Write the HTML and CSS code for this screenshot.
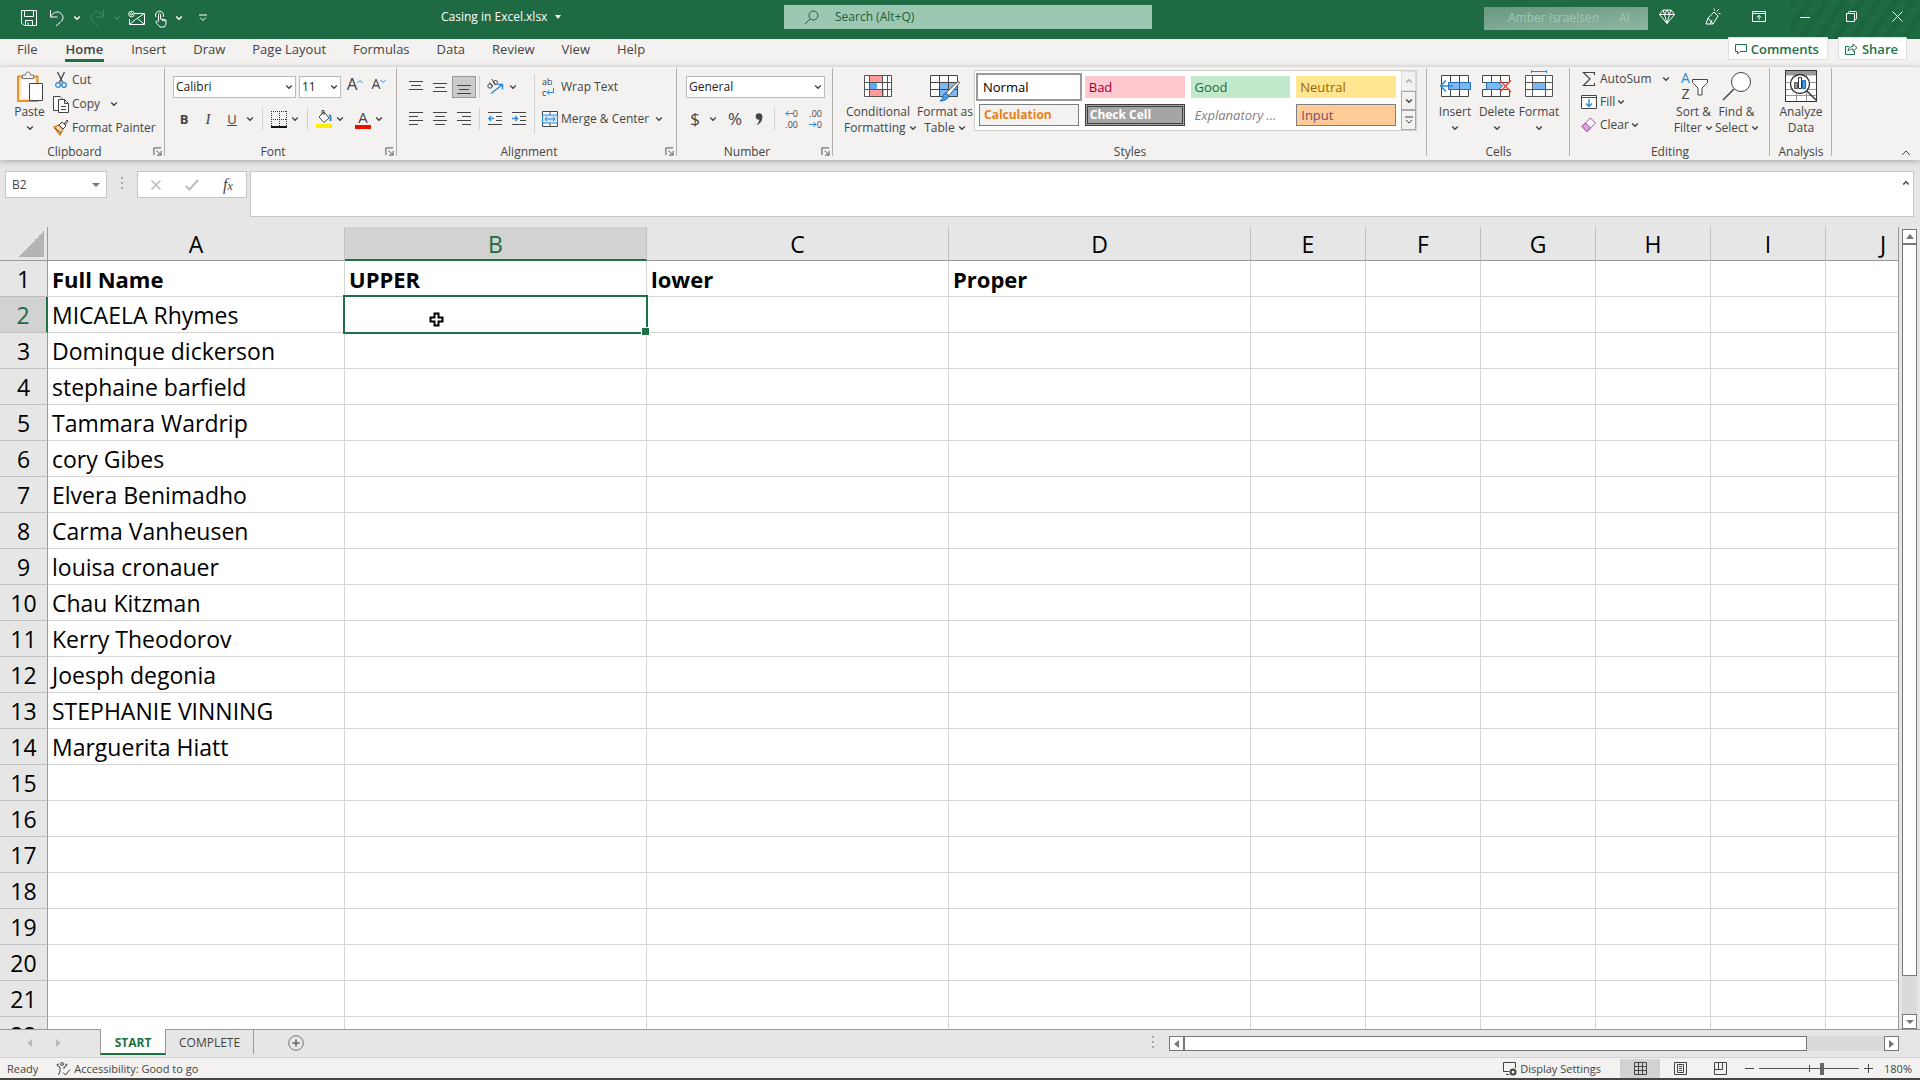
FILE: index.html
```html
<!DOCTYPE html>
<html lang="en">
<head>
  <meta charset="UTF-8">
  <meta name="viewport" content="width=device-width, initial-scale=1.0">
  <title>Casing in Excel.xlsx</title>
  <link rel="stylesheet" href="styles.css">
</head>
<body>
  <svg class="defs" aria-hidden="true">
    <symbol id="chev" viewBox="0 0 8 8"><path d="M1.2 2.5 4 5.3 6.8 2.5" fill="none" stroke="currentColor" stroke-width="1.4"/></symbol>
    <symbol id="launch" viewBox="0 0 10 10"><path d="M1 9V1h8M4 4l4.5 4.5M9 4.5V9H4.500" fill="none" stroke="currentColor"/></symbol>
  </svg>

  <header class="titlebar">
    <div class="quick">
      <button class="qa" aria-label="Save"><svg width="18" height="18" viewBox="0 0 18 18"><path d="M1.500 1.500h15v15H4l-2.500-2.500zM4.500 1.500v6h9v-6M5.500 16.500v-5h7v5M8 16v-2.500"/></svg></button>
      <button class="qa" aria-label="Undo"><svg width="16" height="18" viewBox="0 0 16 18"><path d="M1.500 1v7h7M1.500 8C4 3 9 1.500 12 4.500s2.500 6-.5 8.500L7 17"/></svg></button>
      <button class="qd" aria-label="Undo list"><svg class="chev"><use href="#chev"/></svg></button>
      <button class="qa dim" aria-label="Redo"><svg width="16" height="18" viewBox="0 0 16 18"><path d="M14.500 1v7h-7M14.500 8C12 3 7 1.500 4 4.500s-2.500 6 .5 8.500L9 17"/></svg></button>
      <button class="qd dim" aria-label="Redo list"><svg class="chev"><use href="#chev"/></svg></button>
      <button class="qa" aria-label="Email"><svg width="18" height="16" viewBox="0 0 18 16"><path d="M7 3.500h9.500v11h-15V9M1.500 14.500l6-5 9-6M10 9l6 5"/><circle cx="3.500" cy="4" r="2.800"/><circle cx="3.500" cy="4" r="1"/></svg></button>
      <button class="qa touch" aria-label="Touch mode"><svg width="14" height="19" viewBox="0 0 14 19"><path d="M2 8a4 4 0 1 1 7 0M4.500 12V5.500c0-1.500 2-1.500 2 0V10l5.500 1v4l-1.500 3H6L2 13.500c-.5-1 .8-2 1.500-1.200L4.500 13M8.500 10v2M10.200 10.500v2"/></svg></button>
      <button class="qd" aria-label="Mode list"><svg class="chev"><use href="#chev"/></svg></button>
      <button class="qa custom" aria-label="Customize toolbar"><svg width="8" height="8" viewBox="0 0 8 8"><path d="M0 1h8M1 3.500l3 3 3-3"/></svg></button>
    </div>
    <div class="file-name">Casing in Excel.xlsx <span class="tri"></span></div>
    <label class="search">
      <svg width="15" height="15" viewBox="0 0 15 15"><circle cx="9.500" cy="5.500" r="4.500"/><path d="M6.200 8.800.8 14.200"/></svg>
      <input type="text" placeholder="Search (Alt+Q)" aria-label="Search">
    </label>
    <div class="window">
      <div class="account"><span>Amber Israelsen</span><span>AI</span></div>
      <button class="wb" aria-label="Premium"><svg width="16" height="15" viewBox="0 0 16 15"><path d="M4 1h8l3.500 4.500L8 14.500.5 5.500zM.5 5.500h15M4 1l1.500 4.500L8 14.500l2.500-9L12 1M5.500 5.500 8 1l2.500 4.500"/></svg></button>
      <button class="wb" aria-label="Draw"><svg width="16" height="17" viewBox="0 0 16 17"><path d="M1 16l2-6 6-6 4 4-5 8zM3 10l5 6M5 16l2-4M9.500 2.500 9 .5M11.500 3.500 14 1M13.500 5.500h2"/></svg></button>
      <button class="wb" aria-label="Ribbon display"><svg width="14" height="13" viewBox="0 0 14 13"><path d="M.5 1.500h13v10H.5zM.5 3.500h13M7 10V5.500M4.800 7.500 7 5.300l2.200 2.200"/></svg></button>
      <button class="wb" aria-label="Minimize"><svg width="10" height="10" viewBox="0 0 10 10"><path d="M0 5.500h10"/></svg></button>
      <button class="wb" aria-label="Restore"><svg width="11" height="11" viewBox="0 0 11 11"><path d="M.5 2.500h8v8h-8zM2.500 2.500V1.500q0-1 1-1h6q1 0 1 1v6q0 1-1 1h-1"/></svg></button>
      <button class="wb" aria-label="Close"><svg width="11" height="11" viewBox="0 0 11 11"><path d="M.5.5l10 10M10.500.5l-10 10"/></svg></button>
    </div>
  </header>

  <nav class="tabs">
    <a href="#">File</a>
    <a href="#" class="active">Home</a>
    <a href="#">Insert</a>
    <a href="#">Draw</a>
    <a href="#">Page Layout</a>
    <a href="#">Formulas</a>
    <a href="#">Data</a>
    <a href="#">Review</a>
    <a href="#">View</a>
    <a href="#">Help</a>
    <div class="tab-actions">
      <button><svg width="12" height="12" viewBox="0 0 12 12"><path d="M.5 1.500h11v7H5l-2.500 2.500V8.500h-2z"/></svg>Comments</button>
      <button><svg width="13" height="12" viewBox="0 0 13 12"><path d="M4 3.500H.5v8h9V8M3 8c0-3 2-4.500 5-4.500V1l4 3.700L8 8.300V6C6 6 4.500 6.500 3 8z"/></svg>Share</button>
    </div>
  </nav>

  <section class="ribbon">
    <div class="group clipboard">
      <div class="group-body">
        <button class="big">
          <svg class="art" width="28" height="32" viewBox="0 0 28 32"><path d="M2 6.500h19.500V31H2z" fill="#fde3bd" stroke="#e8912d" stroke-width="2"/><path d="M5 9.500h14V29H5z" fill="#fff"/><path d="M6.500 8.500V5h3c0-4 5-4 5 0h3v3.500z" fill="#f3f2f1" stroke="#777"/><path d="M13.500 13.500h13v17h-13z" fill="#fff" stroke="#444"/></svg>
          <span>Paste</span><svg class="chev"><use href="#chev"/></svg>
        </button>
        <div class="list">
          <div class="item"><button><svg class="art" width="16" height="18" viewBox="0 0 16 18"><path d="M4.500 1l5.500 11M11.500 1 6 12" stroke="#444" stroke-width="1.300"/><circle cx="5" cy="14" r="2.300" stroke="#2b88d8" stroke-width="1.300"/><circle cx="11" cy="14" r="2.300" stroke="#2b88d8" stroke-width="1.300"/></svg>Cut</button></div>
          <div class="item"><button><svg class="art" width="16" height="18" viewBox="0 0 16 18"><path d="M5 15.500H.5v-14H7l2 2" fill="#fff" stroke="#444"/><path d="M5.500 4.500h6l4 4v9h-10zM11.500 4.500v4h4M8 11.500h5M8 14.500h5" fill="#fff" stroke="#444"/></svg>Copy</button><button class="dd far" aria-label="Copy options"><svg class="chev"><use href="#chev"/></svg></button></div>
          <div class="item"><button><svg class="art" width="16" height="18" viewBox="0 0 16 18"><path d="M1 8l5-2 4 4-3 6z" fill="#fbd3a5" stroke="#e07b1a" stroke-width="1.400"/><path d="M2 9l6 5M6 6l3-3 4 4-3 3zM11 5l3-4 1 1-3 4" fill="#fff" stroke="#444"/></svg>Format Painter</button></div>
        </div>
      </div>
      <div class="group-label"><span>Clipboard</span><button aria-label="Clipboard options"><svg><use href="#launch"/></svg></button></div>
    </div>

    <div class="group font">
      <div class="group-body rows">
        <div class="row row-font">
          <div class="combo combo-font"><select aria-label="Font"><option>Calibri</option></select><svg class="chev"><use href="#chev"/></svg></div>
          <div class="combo combo-size"><select aria-label="Font size"><option>11</option></select><svg class="chev"><use href="#chev"/></svg></div>
          <div class="pair">
            <button class="ib grow" aria-label="Increase font size">A<svg class="blue" width="6" height="5" viewBox="0 0 6 5"><path d="M.5 4 3 1.500 5.500 4"/></svg></button>
            <button class="ib grow shrink" aria-label="Decrease font size">A<svg class="blue" width="6" height="5" viewBox="0 0 6 5"><path d="M.5 1 3 3.500 5.500 1"/></svg></button>
          </div>
        </div>
        <div class="row">
          <button class="ib b">B</button><button class="ib i">I</button><button class="ib u">U</button>
          <button class="dd" aria-label="Underline options"><svg class="chev"><use href="#chev"/></svg></button><i class="sep wide"></i>
          <button class="ib s" aria-label="Borders"><svg class="art" width="16" height="17" viewBox="0 0 16 17"><path d="M.5 0v15M15.500 0v15M8.500 0v15M0 .5h16M0 8.500h16" stroke="#333" stroke-dasharray="1 1"/><path d="M0 16h16" stroke="#111" stroke-width="2"/></svg></button>
          <button class="dd" aria-label="Border options"><svg class="chev"><use href="#chev"/></svg></button><i class="sep wide"></i>
          <button class="ib s" aria-label="Fill color"><svg class="art" width="16" height="18" viewBox="0 0 16 18"><path d="M3 7l5-5 5 6-5 4.500zM6 4V.5h2V5" fill="#fff" stroke="#444"/><path d="M13 5l1.500 1v5" stroke="#2b88d8" stroke-width="2"/><path d="M0 14h16v4H0z" fill="#ffed00"/></svg></button>
          <button class="dd" aria-label="Fill options"><svg class="chev"><use href="#chev"/></svg></button>
          <button class="ib s a" aria-label="Font color">A</button>
          <button class="dd" aria-label="Font color options"><svg class="chev"><use href="#chev"/></svg></button>
        </div>
      </div>
      <div class="group-label"><span>Font</span><button aria-label="Font options"><svg><use href="#launch"/></svg></button></div>
    </div>

    <div class="group alignment">
      <div class="group-body">
        <div class="rows">
          <div class="row">
            <button class="ib" aria-label="Top align"><svg class="line" width="14" height="14" viewBox="0 0 14 14"><path d="M0 1.500h14M2 5.500h10M0 9.500h14"/></svg></button>
            <button class="ib" aria-label="Middle align"><svg class="line" width="14" height="14" viewBox="0 0 14 14"><path d="M0 3.500h14M2 7.500h10M0 11.500h14"/></svg></button>
            <button class="ib on" aria-label="Bottom align"><svg class="line" width="14" height="14" viewBox="0 0 14 14"><path d="M0 5.500h14M2 9.500h10M0 13.500h14"/></svg></button>
            <i class="sep"></i>
            <button class="ib" aria-label="Orientation"><svg class="art" width="18" height="16" viewBox="0 0 18 16"><g stroke="#444"><circle cx="4" cy="7" r="2.200"/><path d="M3.500 3.500 7 8M5.500 0l4 5.500"/><circle cx="9.500" cy="3.500" r="2"/></g><path d="M5 14.500 16 6M11.500 5.500h5v5" stroke="#2b88d8" stroke-width="1.400"/></svg></button>
            <button class="dd" aria-label="Orientation options"><svg class="chev"><use href="#chev"/></svg></button>
          </div>
          <div class="row">
            <button class="ib" aria-label="Align left"><svg class="line" width="14" height="14" viewBox="0 0 14 14"><path d="M0 .5h14M0 4.500h9M0 8.500h14M0 12.500h9"/></svg></button>
            <button class="ib" aria-label="Center"><svg class="line" width="14" height="14" viewBox="0 0 14 14"><path d="M0 .5h14M2 4.500h10M0 8.500h14M2 12.500h10"/></svg></button>
            <button class="ib" aria-label="Align right"><svg class="line" width="14" height="14" viewBox="0 0 14 14"><path d="M0 .5h14M5 4.500h9M0 8.500h14M5 12.500h9"/></svg></button>
            <i class="sep"></i>
            <button class="ib" aria-label="Decrease indent"><svg class="line" width="14" height="14" viewBox="0 0 14 14"><path d="M0 .5h14M8 4.500h6M8 8.500h6M0 12.500h14"/><path class="bl" d="M6 6.500H.8M3 4 .8 6.500 3 9"/></svg></button>
            <button class="ib" aria-label="Increase indent"><svg class="line" width="14" height="14" viewBox="0 0 14 14"><path d="M0 .5h14M8 4.500h6M8 8.500h6M0 12.500h14"/><path class="bl" d="M0 6.500h5.500M3.300 4l2.200 2.500L3.300 9"/></svg></button>
          </div>
        </div>
        <i class="sep tall"></i>
        <div class="rows wrap">
          <div class="row"><button class="with-icon"><span class="ab"><span>ab</span><span>c<svg class="blue" width="9" height="8" viewBox="0 0 9 8"><path d="M7.500 0v4.500H1M3.500 2 1 4.500 3.500 7"/></svg></span></span>Wrap Text</button></div>
          <div class="row"><button class="with-icon"><svg class="art" width="16" height="16" viewBox="0 0 16 16"><path d="M.5.5h15v15H.5zM8 0v4M8 12v4" fill="#fff" stroke="#444"/><path d="M.5 4h15v8H.5z" fill="#cfe6fa" stroke="#2b88d8"/><path d="M3 8h10M5 6 3 8l2 2M11 6l2 2-2 2" stroke="#2b88d8"/></svg>Merge &amp; Center</button><button class="dd merge" aria-label="Merge options"><svg class="chev"><use href="#chev"/></svg></button></div>
        </div>
      </div>
      <div class="group-label"><span>Alignment</span><button aria-label="Alignment options"><svg><use href="#launch"/></svg></button></div>
    </div>

    <div class="group number">
      <div class="group-body rows">
        <div class="row"><div class="combo combo-number"><select aria-label="Number format"><option>General</option></select><svg class="chev"><use href="#chev"/></svg></div></div>
        <div class="row">
          <button class="ib sym">$</button><button class="dd" aria-label="Currency options"><svg class="chev"><use href="#chev"/></svg></button>
          <button class="ib sym pct">%</button>
          <button class="ib" aria-label="Comma style"><svg class="art" width="8" height="13" viewBox="0 0 8 13"><circle cx="4" cy="3.500" r="3.300" fill="#444"/><path d="M7.300 3.500C7.500 8 5 11 1 12.500 3.500 10 4.500 8 4.500 5z" fill="#444"/></svg></button>
          <i class="sep"></i>
          <button class="ib dec" aria-label="Increase decimal"><span><svg class="blue" width="8" height="7" viewBox="0 0 8 7"><path d="M8 3.500H1M3.500 1 1 3.500 3.500 6"/></svg>0</span><span>.00</span></button>
          <button class="ib dec" aria-label="Decrease decimal"><span>.00</span><span><svg class="blue" width="8" height="7" viewBox="0 0 8 7"><path d="M0 3.500h7M4.500 1 7 3.500 4.500 6"/></svg>0</span></button>
        </div>
      </div>
      <div class="group-label"><span>Number</span><button aria-label="Number options"><svg><use href="#launch"/></svg></button></div>
    </div>

    <div class="group styles">
      <div class="group-body">
        <button class="big cond">
          <svg class="art" width="28" height="32" viewBox="0 0 28 32"><path d="M.5 5.500h27v21H.5z" fill="#fff"/><path d="M6 5.500h12v7H6zM6 19.500h14v7H6z" fill="#ff9a9a"/><path d="M6 12.500h7v7H6z" fill="#62a9ee"/><path d="M.5 5.500h27v21H.5zM.5 12.500h27M.5 19.500h27M5.500 5.500v21M18.500 5.500v21M23.500 5.500v21" stroke="#555"/></svg>
          <span>Conditional<br>Formatting <svg class="chev"><use href="#chev"/></svg></span>
        </button>
        <button class="big fmt">
          <svg class="art" width="32" height="32" viewBox="0 0 32 32"><path d="M1.500 5.500h27v21h-27z" fill="#fff"/><path d="M10.500 12.500h18v14h-18z" fill="#7db9f0"/><path d="M1.500 5.500h27v21h-27zM1.500 12.500h27M1.500 19.500h27M10.500 5.500v21M19.500 5.500v21" stroke="#444"/><path d="M17 23 29 11.500q2 0 1 2L20 25.500z" fill="#fff" stroke="#555"/><path d="M17 23l3 3q-2 5-9 5 3-2 3-5 1-3 3-3z" fill="#4a9be8" stroke="#1f6fb8"/></svg>
          <span>Format as<br>Table <svg class="chev"><use href="#chev"/></svg></span>
        </button>
        <div class="gallery">
          <div class="swatches">
            <button class="sw normal">Normal</button><button class="sw bad">Bad</button><button class="sw good">Good</button><button class="sw neutral">Neutral</button>
            <button class="sw calc">Calculation</button><button class="sw check">Check Cell</button><button class="sw expl">Explanatory ...</button><button class="sw input">Input</button>
          </div>
          <div class="spin">
            <button class="off" aria-label="Scroll up"><svg class="chev up"><use href="#chev"/></svg></button>
            <button aria-label="Scroll down"><svg class="chev"><use href="#chev"/></svg></button>
            <button aria-label="More styles"><svg width="8" height="8" viewBox="0 0 8 8" fill="none" stroke="currentColor"><path d="M0 1h8M1 4l3 3 3-3"/></svg></button>
          </div>
        </div>
      </div>
      <div class="group-label"><span>Styles</span></div>
    </div>

    <div class="group cells">
      <div class="group-body">
        <button class="big"><svg class="art" width="32" height="32" viewBox="0 0 32 32"><path d="M2.500 5.500h27v21h-27zM11.500 5.500v21M20.500 5.500v21" fill="#fff" stroke="#444"/><path d="M9.500 12.500h22v7h-22z" fill="#7db9f0" stroke="#1f6fb8"/><path d="M20.500 12.500v7" stroke="#1f6fb8"/><path d="M1 16h13M7 10.500 1.500 16 7 21.500" stroke="#2b88d8" stroke-width="1.500"/></svg><span>Insert</span><svg class="chev"><use href="#chev"/></svg></button>
        <button class="big"><svg class="art" width="32" height="32" viewBox="0 0 32 32"><path d="M1.500 5.500h27v7h-27zM1.500 19.500h27v7h-27zM10.500 5.500v7M19.500 5.500v7M10.500 19.500v7M19.500 19.500v7" fill="#fff" stroke="#444"/><path d="M5.500 12.500h12l4 3.500-4 3.500h-12z" fill="#7db9f0" stroke="#1f6fb8"/><path d="M19 10.500 30 22M30 10.500 19 22" stroke="#e8493a" stroke-width="1.500"/></svg><span>Delete</span><svg class="chev"><use href="#chev"/></svg></button>
        <button class="big"><svg class="art" width="32" height="32" viewBox="0 0 32 32"><path d="M2.500 5.500h27v21h-27z" fill="#fff"/><path d="M9.500 12.500h13v7h-13z" fill="#7db9f0"/><path d="M2.500 5.500h27v21h-27zM2.500 12.500h27M2.500 19.500h27M9.500 5.500v21M22.500 5.500v21" stroke="#555"/><path d="M8.500 0v3M23.500 0v3M8.500 1.500h15" stroke="#2b88d8"/></svg><span>Format</span><svg class="chev"><use href="#chev"/></svg></button>
      </div>
      <div class="group-label"><span>Cells</span></div>
    </div>

    <div class="group editing">
      <div class="group-body">
        <div class="list">
          <div class="item"><button><svg class="art" width="16" height="16" viewBox="0 0 16 16"><path d="M13.500 4V1.500h-11L9 8l-6.500 6.500h11V12" stroke="#444" stroke-width="1.200"/></svg>AutoSum</button><button class="dd far" aria-label="AutoSum options"><svg class="chev"><use href="#chev"/></svg></button></div>
          <div class="item"><button><svg class="art" width="16" height="16" viewBox="0 0 16 16"><path d="M.5 1.500h15v13H.5zM.5 3.500h15" fill="#fff" stroke="#444"/><path d="M8 5v7.500M5 9.500l3 3 3-3" stroke="#2b88d8" stroke-width="1.400"/></svg>Fill</button><button class="dd" aria-label="Fill options"><svg class="chev"><use href="#chev"/></svg></button></div>
          <div class="item"><button><svg class="art" width="16" height="16" viewBox="0 0 16 16"><path d="M1 9.500 9.500 1l5 5L6 14.500z" fill="#fff" stroke="#a349a4"/><path d="M1 9.500 4.500 6l5 5L6 14.500z" fill="#dfa6e0" stroke="#a349a4"/></svg>Clear</button><button class="dd" aria-label="Clear options"><svg class="chev"><use href="#chev"/></svg></button></div>
        </div>
        <button class="big"><span class="az"><b>A</b><b>Z</b></span><svg class="art funnel" width="16" height="32" viewBox="0 0 16 32"><path d="M.5 9.500h15v3L10 18v7H6v-7L.5 12.500z" fill="#fff" stroke="#444"/></svg><span>Sort &amp;<br>Filter <svg class="chev"><use href="#chev"/></svg></span></button>
        <button class="big"><svg class="art" width="32" height="32" viewBox="0 0 32 32"><circle cx="20" cy="12" r="9.500" fill="#fff" stroke="#444"/><path d="M13 19 2 30" stroke="#444" stroke-width="1.400"/></svg><span>Find &amp;<br>Select <svg class="chev"><use href="#chev"/></svg></span></button>
      </div>
      <div class="group-label"><span>Editing</span></div>
    </div>

    <div class="group analysis">
      <div class="group-body">
        <button class="big"><svg class="art" width="32" height="32" viewBox="0 0 32 32"><path d="M.5.5h31v31H.5z" fill="#fff" stroke="#333"/><path d="M1 1h30v4.500H1z" fill="#999"/><path d="M1 12.500h30M1 19.500h30M1 25.500h30M11.500 5v26M21.500 5v26" stroke="#999"/><path d="M.5.5h31v31H.5z" stroke="#333"/><circle cx="15" cy="14" r="9.500" fill="#fff" stroke="#333" stroke-width="1.300"/><path d="M22 21l9 9" stroke="#333" stroke-width="1.500"/><path d="M9.500 12.500h3v6h-3z" fill="#999" stroke="#555"/><path d="M13.500 7.500h3v11h-3z" fill="#fff" stroke="#333"/><path d="M17.500 10.500h3v8h-3z" fill="#4a9be8" stroke="#1f6fb8"/></svg><span>Analyze<br>Data</span></button>
      </div>
      <div class="group-label"><span>Analysis</span></div>
    </div>
    <button class="collapse" aria-label="Collapse ribbon"><svg width="10" height="6" viewBox="0 0 10 6"><path d="M1 5l4-4 4 4"/></svg></button>
  </section>

  <section class="formula-bar">
    <div class="name-box"><input type="text" value="B2" aria-label="Name box"><span class="tri"></span></div>
    <span class="dots"></span>
    <div class="fx-box">
      <button aria-label="Cancel"><svg width="12" height="12" viewBox="0 0 12 12"><path d="M1.500 1.500l9 9M10.500 1.500l-9 9" stroke="#bdbdbd" stroke-width="1.600"/></svg></button>
      <button aria-label="Enter"><svg width="14" height="12" viewBox="0 0 14 12"><path d="M1 7l3.500 3.500L13 1" stroke="#bdbdbd" stroke-width="2"/></svg></button>
      <button class="fx" aria-label="Insert function">f<small>x</small></button>
    </div>
    <div class="formula"><textarea aria-label="Formula"></textarea><svg class="chev up"><use href="#chev"/></svg></div>
  </section>

  <main class="sheet">
    <div class="grid-wrap">
      <table class="grid">
        <colgroup><col class="c-num"><col class="c-a"><col class="c-b"><col class="c-b"><col class="c-b"><col class="c-e"><col class="c-e"><col class="c-e"><col class="c-e"><col class="c-e"><col class="c-e"></colgroup>
        <thead>
          <tr><th class="corner"></th><th>A</th><th class="sel">B</th><th>C</th><th>D</th><th>E</th><th>F</th><th>G</th><th>H</th><th>I</th><th>J</th></tr>
        </thead>
        <tbody id="rows"></tbody>
      </table>
    </div>
    <div class="vscroll">
      <button aria-label="Up"><span class="tri up"></span></button>
      <div class="track"><div class="thumb"></div></div>
      <button aria-label="Down"><span class="tri"></span></button>
    </div>
  </main>

  <div class="sheet-bar">
    <div class="sheet-nav"><button aria-label="Previous sheet"><span class="tri left"></span></button><button aria-label="Next sheet"><span class="tri right"></span></button></div>
    <button class="sheet-tab current">START</button>
    <button class="sheet-tab">COMPLETE</button>
    <button class="add" aria-label="New sheet"><svg width="16" height="16" viewBox="0 0 16 16"><circle cx="8" cy="8" r="7.300" stroke="#777"/><path d="M8 4.500v7M4.500 8h7" stroke="#666" stroke-width="1.600"/></svg></button>
    <div class="hscroll">
      <span class="dots"></span>
      <button aria-label="Left"><span class="tri left"></span></button>
      <div class="track"><div class="thumb"></div></div>
      <button aria-label="Right"><span class="tri right"></span></button>
    </div>
  </div>

  <footer class="status">
    <span>Ready</span>
    <button class="acc"><svg width="15" height="14" viewBox="0 0 15 14"><circle cx="6" cy="2" r="1.500"/><path d="M1 2.500q0 2 3 2.500v4l-1.500 4M11 2.500q0 2-3 2.500v2M1 2.500 3 2M11 2.500 9 2M7 10.500l2.500 2.500L14 7.500"/></svg>Accessibility: Good to go</button>
    <div class="status-right">
      <button class="disp"><svg width="14" height="14" viewBox="0 0 14 14"><path d="M6 9.500H.5v-9h12V6M3 12.500h3"/><circle cx="10" cy="10" r="2.500" stroke-width="2"/></svg>Display Settings</button>
      <button class="view on" aria-label="Normal view"><svg width="13" height="13" viewBox="0 0 13 13"><path d="M.5.500h12v12H.5zM4.500 0v13M8.500 0v13M0 4.500h13M0 8.500h13"/></svg></button>
      <button class="view" aria-label="Page layout view"><svg width="13" height="13" viewBox="0 0 13 13"><path d="M.5.500h12v12H.5zM3.500 2.500h6v8h-6zM5 4.500h3M5 6.500h3M5 8.500h3"/></svg></button>
      <button class="view" aria-label="Page break view"><svg width="13" height="13" viewBox="0 0 13 13"><path d="M.5.500h12v12H.5zM4.500 1v6.500M8.500 1v6.500h-8"/></svg></button>
      <button class="zoom-btn" aria-label="Zoom out"><svg width="9" height="9" viewBox="0 0 9 9"><path d="M0 4.500h9"/></svg></button>
      <input class="zoom" type="range" min="0" max="100" value="64" aria-label="Zoom">
      <button class="zoom-btn" aria-label="Zoom in"><svg width="9" height="9" viewBox="0 0 9 9"><path d="M0 4.500h9M4.500 0v9"/></svg></button>
      <span class="percent">180%</span>
    </div>
  </footer>

  <script>
    const names = ["MICAELA Rhymes", "Dominque dickerson", "stephaine barfield", "Tammara Wardrip",
      "cory Gibes", "Elvera Benimadho", "Carma Vanheusen", "louisa cronauer", "Chau Kitzman",
      "Kerry Theodorov", "Joesph degonia", "STEPHANIE VINNING", "Marguerita Hiatt"];
    const headings = ["Full Name", "UPPER", "lower", "Proper"];
    const cursor = '<svg class="cursor" width="16" height="16" viewBox="0 0 16 16"><path d="M5.500 1.500h4v4h4v4h-4v4h-4v-4h-4v-4h4z"/></svg>';

    let html = "";
    for (let r = 1; r <= 22; r++) {
      html += `<tr><th class="${r === 2 ? 'sel' : ''}">${r}</th>`;
      for (let c = 0; c < 10; c++) {
        if (r === 1) {
          html += `<td class="head">${headings[c] || ''}</td>`;
        } else if (r === 2 && c === 1) {
          html += `<td class="active"><span class="box"></span>${cursor}</td>`;
        } else {
          html += `<td>${c === 0 ? (names[r - 2] || '') : ''}</td>`;
        }
      }
      html += "</tr>";
    }
    document.getElementById("rows").innerHTML = html;
  </script>
</body>
</html>
```
FILE: styles.css
```css
* {
  box-sizing: border-box;
}
body {
  margin: 0;
  height: 100vh;
  display: flex;
  flex-direction: column;
  overflow: hidden;
  font-family: "Open Sans", "Noto Sans", sans-serif;
  font-size: 12px;
  line-height: 16px;
  color: #444;
  background: #e6e6e6;
  border-bottom: 2px solid #444;
}
button {
  display: flex;
  align-items: center;
  justify-content: center;
  padding: 0;
  border: 0;
  background: none;
  font: inherit;
  color: inherit;
  white-space: nowrap;
}
svg {
  flex: none;
  fill: none;
}
.defs {
  display: none;
}
.chev {
  width: 8px;
  height: 8px;
}
.chev.up {
  transform: rotate(180deg);
}
.tri {
  flex: none;
  border: 4px solid transparent;
  border-top-color: #777;
  border-bottom: 0;
}
.tri.up {
  border-top: 0;
  border-bottom: 5px solid #777;
}
.tri.left {
  border: 4px solid transparent;
  border-right: 5px solid #777;
  border-left: 0;
}
.tri.right {
  border: 4px solid transparent;
  border-left: 5px solid #777;
  border-right: 0;
}
.blue {
  stroke: #2b88d8;
}

/* title bar */
.titlebar {
  flex: none;
  height: 39px;
  display: flex;
  align-items: flex-start;
  color: #fff;
  background: #1e6a43;
}
.titlebar svg {
  stroke: currentColor;
}
.quick {
  display: flex;
  align-items: center;
  width: 441px;
  height: 36px;
  padding-left: 17px;
}
.qa {
  width: 24px;
}
.qa + .qa {
  margin-left: 4px;
}
.qd {
  width: 16px;
}
.qd .chev {
  stroke: none;
}
.dim {
  color: #3f8a62;
}
.qa + .touch {
  margin: 0 -2px 0 0;
}
.custom {
  margin-left: 4px;
}
.file-name {
  display: flex;
  align-items: center;
  gap: 8px;
  width: 343px;
  height: 34px;
}
.file-name .tri {
  border-top-color: #fff;
  border-left-width: 3px;
  border-right-width: 3px;
}
.search {
  display: flex;
  align-items: center;
  gap: 16px;
  width: 368px;
  height: 24px;
  margin-top: 5px;
  padding-left: 20px;
  color: #1e5c3e;
  background: #9cc8b2;
}
.search input {
  flex: 1;
  border: 0;
  padding: 0;
  background: none;
  font: inherit;
}
.search input::placeholder {
  color: #1e5c3e;
  opacity: 1;
}
.window {
  flex: 1;
  display: flex;
  justify-content: flex-end;
  align-items: center;
  height: 39px;
  padding-bottom: 6px;
  background: repeating-linear-gradient(125deg, #1c633f 0 6px, transparent 6px 14px) right / 130px 100% no-repeat;
}
.account {
  display: flex;
  justify-content: center;
  gap: 20px;
  width: 164px;
  height: 23px;
  margin: 4px -4px 0 0;
  padding: 3px 0 0 6px;
  color: #a5c5b3;
  background: linear-gradient(175deg, #69977f, #8fb7a2);
}
.wb {
  width: 46px;
}

/* tab row */
.tabs {
  flex: none;
  display: flex;
  gap: 27px;
  height: 28px;
  padding: 2px 13px 0 17px;
  font-size: 13px;
  background: #f3f2f1;
}
.tabs a {
  height: 21px;
  line-height: 17px;
  color: #444;
  text-decoration: none;
}
.tabs .active {
  padding: 0 1px;
  font-weight: 600;
  border-bottom: 3px solid #1e7145;
}
.tab-actions {
  display: flex;
  gap: 10px;
  margin: -4px 0 0 auto;
}
.tab-actions button {
  gap: 4px;
  height: 23px;
  padding: 0 8px 0 6px;
  font-weight: 600;
  color: #1e7145;
  background: #fff;
  border: 1px solid #e1dfdd;
}
.tab-actions svg {
  stroke: #1e7145;
}

/* ribbon */
.ribbon {
  position: relative;
  z-index: 1;
  flex: none;
  display: flex;
  height: 93px;
  background: #f3f2f1;
  box-shadow: 0 1px 6px rgba(0, 0, 0, 0.3);
}
.group {
  position: relative;
  display: flex;
  flex-direction: column;
}
.group::after {
  content: "";
  position: absolute;
  right: 0;
  top: 1px;
  bottom: 4px;
  border-right: 1px solid #b3b0ad;
}
.group-body {
  display: flex;
  height: 76px;
}
.group-label {
  display: flex;
  height: 17px;
}
.group-label span {
  flex: 1;
  padding-top: 1px;
  text-align: center;
}
.group-label button {
  width: 16px;
}
.group-label svg {
  width: 9px;
  height: 9px;
}
.clipboard { width: 165px; }
.font { width: 232px; }
.alignment { width: 280px; }
.number { width: 156px; }
.styles { width: 594px; }
.cells { width: 143px; }
.editing { width: 200px; }
.analysis { width: 62px; }
.clipboard .group-body { padding-left: 8px; }
.font .group-body { padding-left: 7px; }
.alignment .group-body { padding-left: 7px; }
.number .group-body { padding-left: 6px; }
.styles .group-body { padding-left: 11px; gap: 4px; }
.cells .group-body { padding-left: 7px; }
.editing .group-body { padding-left: 11px; }
.analysis .group-body { justify-content: center; }

.big {
  flex-wrap: wrap;
  align-content: flex-start;
  width: 43px;
  padding-top: 3px;
}
.big > span {
  width: 100%;
  margin-top: 2px;
  text-align: center;
}
.big > .chev {
  margin-top: 4px;
}
.cond {
  width: 68px;
}
.fmt {
  width: 58px;
}
.cells .big {
  width: 42px;
}
.analysis .big {
  width: 60px;
}
.big > .az {
  display: flex;
  flex-direction: column;
  width: 12px;
  height: 32px;
  margin: 0;
  font-size: 14px;
}
.az b {
  font-weight: 400;
}
.az b:first-child {
  color: #2b88d8;
}
.list {
  padding-top: 1px;
}
.item {
  display: flex;
  height: 24px;
}
.item button {
  gap: 3px;
}
.editing .list {
  width: 91px;
  padding-top: 0;
}
.editing .item {
  height: 23px;
}
.clipboard .list {
  padding-left: 2px;
}
.dd {
  width: 12px;
}
.dd.far {
  margin-left: 8px;
}
.dd.merge {
  margin-left: 4px;
}
.rows {
  display: flex;
  flex-direction: column;
  gap: 10px;
  padding-top: 9px;
}
.row {
  display: flex;
  height: 22px;
}
.row-font {
  gap: 2px;
}
.pair {
  display: flex;
}
.combo {
  position: relative;
  margin-left: 1px;
}
.combo select {
  appearance: none;
  width: 100%;
  height: 22px;
  padding: 0 2px;
  border: 1px solid #bbb;
  border-radius: 0;
  font: inherit;
  color: #222;
  background: #fff;
}
.combo .chev {
  position: absolute;
  right: 3px;
  top: 7px;
}
.combo-font { width: 123px; }
.combo-size { width: 42px; }
.combo-number { width: 139px; margin-left: 3px; }
.ib {
  width: 24px;
}
.ib.s {
  width: 20px;
}
.ib.on {
  background: #cdcbc9;
  border: 1px solid #999;
}
.b {
  font-weight: 700;
  font-size: 13px;
}
.i {
  font-family: "Liberation Serif", serif;
  font-style: italic;
  font-size: 15px;
}
.u {
  font-size: 13px;
  text-decoration: underline;
}
.ib.a {
  height: 20px;
  margin: 1px 2px 0 9px;
  width: 16px;
  font-size: 15px;
  border-bottom: 4px solid #e81100;
}
.grow {
  align-items: flex-start;
  font-size: 17px;
}
.grow svg {
  margin-top: 3px;
}
.shrink {
  font-size: 14px;
}
.line {
  stroke: #444;
}
.bl {
  stroke: #2b88d8;
  stroke-width: 1.3;
}
.sep {
  flex: none;
  width: 1px;
  margin: 0 3px;
  background: #d2d0ce;
}
.sep.wide {
  margin: 0 6px;
}
.sep.tall {
  height: 60px;
  margin-top: 7px;
}
.wrap {
  padding-left: 4px;
}
.with-icon {
  gap: 3px;
}
.ab {
  display: flex;
  flex-direction: column;
  width: 16px;
  font-size: 9px;
  line-height: 11px;
  text-align: left;
}
.sym {
  font-size: 17px;
}
.pct {
  margin-left: 4px;
}
.dec {
  flex-direction: column;
  align-items: flex-end;
  padding-right: 4px;
  font-size: 9px;
  line-height: 11px;
}
.gallery {
  display: flex;
  width: 443px;
  height: 61px;
  margin: 3px 0 0 -4px;
  border: 1px solid #d2d0ce;
  background: #fff;
}
.swatches {
  display: grid;
  grid-template-columns: repeat(4, 1fr);
  grid-auto-rows: 22px;
  gap: 6px;
  flex: 1;
  padding: 5px 5px 0 4px;
}
.sw {
  justify-content: flex-start;
  padding-left: 4px;
  font-size: 13px;
}
.normal { color: #000; outline: 2px solid #999; outline-offset: 1px; }
.bad { color: #9c0031; background: #ffc7ce; }
.good { color: #1d6b35; background: #c3e9cc; }
.neutral { color: #9c6500; background: #ffe68f; }
.calc { color: #ee7f10; font-weight: 700; background: #f2f2f2; border: 1px solid #7f7f7f; }
.check { color: #fff; font-weight: 700; background: #a5a5a5; border: 3px double #3f3f3f; padding-left: 2px; }
.expl { color: #7f7f7f; font-style: italic; }
.input { color: #75506a; background: #ffcc99; border: 1px solid #7f7f7f; }
.calc, .check { font-size: 12px; }
.spin {
  display: flex;
  flex-direction: column;
  width: 15px;
}
.spin button {
  flex: 1;
  border: 1px solid #aaa;
  background: #f3f2f1;
}
.spin .off {
  color: #aaa;
  border-color: #ddd;
}
.collapse {
  margin: 80px 9px 0 auto;
  height: 12px;
}
.collapse svg {
  stroke: #444;
}

/* formula bar */
.formula-bar {
  flex: none;
  display: flex;
  height: 67px;
  padding: 11px 6px 0 5px;
}
.name-box,
.fx-box {
  display: flex;
  align-items: center;
  height: 27px;
  border: 1px solid #c6c6c6;
  background: #fff;
}
.name-box {
  width: 102px;
  padding: 0 6px;
}
.name-box input {
  flex: 1;
  width: 50px;
  border: 0;
  padding: 0;
  font: inherit;
  color: #444;
}
.dots {
  width: 2px;
  height: 14px;
  background: repeating-linear-gradient(#aaa 0 2px, transparent 2px 5px);
}
.formula-bar .dots {
  margin: 6px 14px 0;
}
.fx-box {
  width: 110px;
}
.fx-box button {
  flex: 1;
}
.fx {
  font-family: "Liberation Serif", serif;
  font-style: italic;
  font-size: 16px;
}
.fx small {
  font-size: 12px;
  margin-top: 3px;
}
.formula {
  position: relative;
  flex: 1;
  margin-left: 3px;
}
.formula textarea {
  display: block;
  width: 100%;
  height: 46px;
  resize: none;
  border: 1px solid #c6c6c6;
  background: #fff;
}
.formula .chev {
  position: absolute;
  right: 4px;
  top: 8px;
}

/* grid */
.sheet {
  flex: 1;
  min-height: 0;
  display: flex;
  padding-right: 3px;
}
.grid-wrap {
  flex: 1;
  overflow: hidden;
  border-right: 1px solid #999;
}
.grid {
  table-layout: fixed;
  width: 1941px;
  border-spacing: 0;
  font-size: 23px;
  line-height: 33px;
  color: #000;
}
.c-num { width: 48px; }
.c-a { width: 297px; }
.c-b { width: 302px; }
.c-e { width: 115px; }
.grid th,
.grid td {
  height: 36px;
  padding: 2px 4px 0;
  border-right: 1px solid #d4d4d4;
  border-bottom: 1px solid #d4d4d4;
  white-space: nowrap;
}
.grid td {
  position: relative;
  background: #fff;
}
.grid th {
  padding: 2px 0 0;
  font-weight: 400;
  background: #e6e6e6;
  border-color: #c0c0c0;
}
.grid thead th {
  height: 34px;
  line-height: 31px;
  border-bottom-color: #999;
}
.grid tbody th {
  border-right-color: #999;
}
.grid .corner {
  border-right-color: #999;
  background: linear-gradient(135deg, transparent 50%, #b4b4b4 50%) 18px 4px / 26px 26px no-repeat, #e6e6e6;
}
.grid th.sel {
  color: #1e6a43;
  background: #d2d2d2;
}
.grid thead .sel {
  line-height: 30px;
  border-bottom: 2px solid #1e7145;
}
.grid tbody .sel {
  border-right: 2px solid #1e7145;
}
.grid .head {
  font-size: 22px;
  font-weight: 700;
}
.box {
  position: absolute;
  z-index: 1;
  inset: -2px -2px;
  border: 2px solid #1e7145;
}
.box::after {
  content: "";
  position: absolute;
  right: -4px;
  bottom: -4px;
  width: 7px;
  height: 7px;
  background: #1e7145;
  border: 1px solid #fff;
}
.cursor {
  position: absolute;
  left: 84px;
  top: 15px;
}
.cursor path {
  fill: #fff;
  stroke: #000;
  stroke-width: 2;
}
.vscroll {
  display: flex;
  flex-direction: column;
  width: 18px;
  padding: 2px 0 0 3px;
}
.vscroll button {
  height: 15px;
  border: 1px solid #777;
  background: #fff;
}
.track {
  flex: 1;
  background: #dadada;
}
.thumb {
  border: 1px solid #777;
  background: #fff;
}
.vscroll .thumb {
  height: 95%;
}

/* sheet tabs */
.sheet-bar {
  flex: none;
  display: flex;
  height: 28px;
  border-top: 1px solid #999;
}
.sheet-nav {
  display: flex;
  gap: 24px;
  width: 100px;
  padding-left: 27px;
}
.sheet-nav .tri.left { border-right-color: #bbb; }
.sheet-nav .tri.right { border-left-color: #bbb; }
.sheet-nav button {
  height: 25px;
}
.sheet-tab {
  height: 24px;
  padding: 1px 13px 0;
  border-right: 1px solid #999;
}
.sheet-tab.current {
  width: 66px;
  height: 26px;
  margin-top: -1px;
  padding: 3px 0 0;
  font-weight: 700;
  color: #1e7145;
  background: #fff;
  border-left: 1px solid #999;
  border-bottom: 2px solid #1e7145;
}
.add {
  height: 26px;
  margin-left: 34px;
}
.hscroll {
  display: flex;
  width: 747px;
  height: 15px;
  margin: 6px 21px 0 auto;
}
.hscroll .dots {
  margin-right: 15px;
}
.hscroll button {
  width: 15px;
  border: 1px solid #777;
  background: #fff;
}
.hscroll .thumb {
  width: 89%;
  height: 15px;
}

/* status bar */
.status {
  flex: none;
  display: flex;
  align-items: center;
  gap: 18px;
  height: 21px;
  padding: 1px 8px 0 7px;
  font-size: 11px;
  background: #f3f2f1;
  border-top: 1px solid #d0d0d0;
}
.status svg {
  stroke: #444;
}
.acc,
.disp {
  gap: 3px;
}
.status-right {
  display: flex;
  align-items: center;
  margin-left: auto;
}
.disp {
  margin-right: 19px;
}
.view {
  width: 40px;
  height: 19px;
}
.view.on {
  background: #d2d2d2;
}
.zoom-btn {
  width: 19px;
}
.zoom {
  appearance: none;
  width: 100px;
  height: 16px;
  margin: 0;
  background: linear-gradient(#555 0 0) center / 100% 1px no-repeat, linear-gradient(#555 0 0) center / 1px 7px no-repeat;
}
.zoom::-webkit-slider-thumb {
  appearance: none;
  width: 4px;
  height: 12px;
  background: #666;
}
.percent {
  margin-left: 6px;
}
```
